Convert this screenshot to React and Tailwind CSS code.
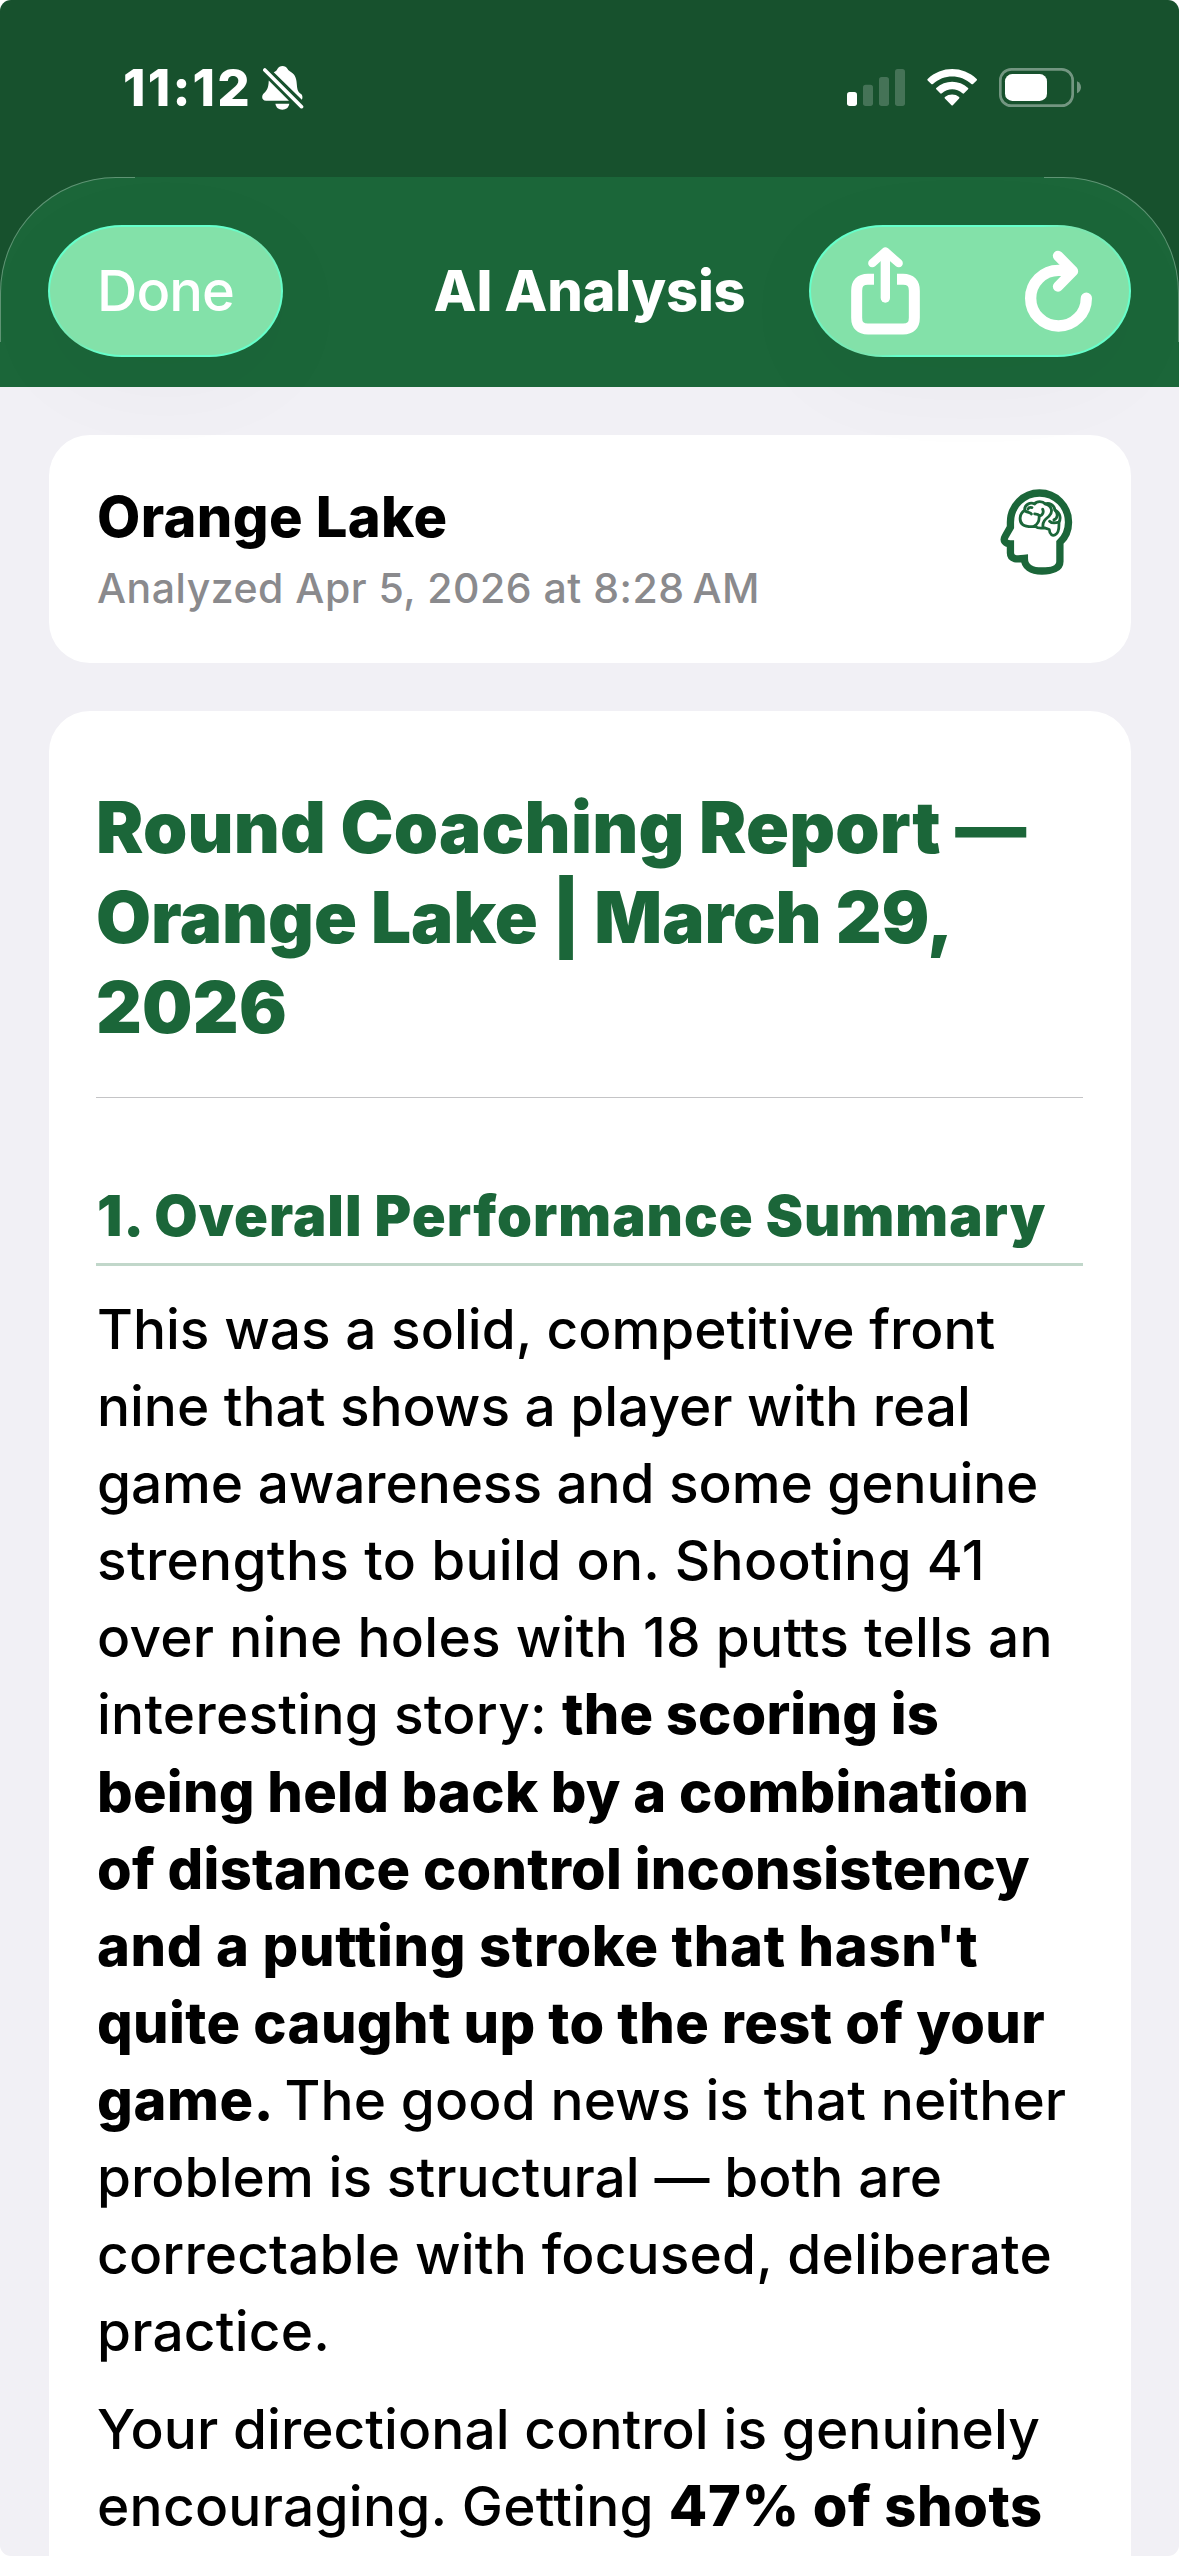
const SignalIcon = () => (
  <svg viewBox="198 207 174 111" className="w-[58px] h-[37px]" fill="white">
    <rect x="198" y="276" width="30" height="42" rx="8" />
    <rect x="246" y="254" width="30" height="64" rx="8" opacity="0.2" />
    <rect x="294" y="231" width="30" height="87" rx="8" opacity="0.2" />
    <rect x="342" y="207" width="30" height="111" rx="8" opacity="0.2" />
  </svg>
);

const WifiIcon = () => (
  <svg viewBox="439 207 151 111" className="w-[50px] h-[37px]" fill="white">
    <path d="M441 237C483 197 547 197 589 237Q591 239 589 241L578 252Q576 254 573 252C540 222 490 222 457 252Q454 254 452 252L441 241Q439 239 441 237Z" />
    <path d="M467 264C494 239 536 239 563 264Q565 266 563 268L551 280Q549 282 546 280C528 264 502 264 484 280Q481 282 479 280L467 268Q465 266 467 264Z" />
    <path d="M493 291C506 281 524 281 536 291Q538 293 536 296L517 316Q515 318 513 316L493 296Q491 293 493 291Z" />
  </svg>
);

const BatteryIcon = () => (
  <svg viewBox="657 204 246 117" className="w-[82px] h-[39px]" fill="white">
    <rect x="661" y="208" width="217" height="109" rx="33" fill="none" stroke="white" strokeWidth="8" opacity="0.4" />
    <rect x="675" y="222" width="126" height="81" rx="22" />
    <path d="M891 244C907 250 907 274 891 280Z" opacity="0.4" />
  </svg>
);

const BellOffIcon = () => (
  <svg viewBox="787 198 126 133" className="w-[42px] h-[44px]" fill="white">
    <path d="M822 217C829 213 831 211 833 207C839 195 858 195 864 207C866 211 869 213 874 216C889 225 891 240 892 256C893 272 897 277 905 283C909 287 910 294 907 300Z" />
    <path d="M807 242L868 303H799C787 303 784 291 790 283C799 274 806 269 807 242Z" />
    <path d="M827 312H869C867 324 859 330 848 330S829 324 827 312Z" />
    <path d="M795 210L906 321" stroke="white" strokeWidth="11" strokeLinecap="round" />
  </svg>
);

const ShareIcon = () => (
  <svg viewBox="213 751 207 264" className="w-[69px] h-[88px]" fill="none" stroke="white">
    <path d="M282 847.5H264Q230 847.5 230 882V963Q230 997 264 997H369Q403 997 403 963V882Q403 847.5 369 847.5H351" strokeWidth="33" />
    <path d="M316 770V904" strokeWidth="28" strokeLinecap="round" />
    <path d="M277 799.5L316 764.5L356 799.5" strokeWidth="25" strokeLinecap="round" strokeLinejoin="round" />
  </svg>
);

const RefreshIcon = () => (
  <svg viewBox="735 752 201 245" className="w-[67px] h-[82px]" fill="none" stroke="white" strokeLinecap="round" strokeLinejoin="round">
    <path d="M919 896A83.5 83.5 0 1 1 835.5 812.5H860" strokeWidth="34" />
    <path d="M834 769L879 815L834 861" strokeWidth="31" />
    <path d="M850 800L868 815L850 830Z" strokeWidth="8" fill="white" />
  </svg>
);

const BrainHeadIcon = () => (
  <svg viewBox="122 207 219 259" className="w-[73px] h-[86px]" fill="none" stroke="#1b6639">
    <path
      d="M153 307A87.5 88 0 0 1 328 307C328 333 318 353 302 368V425C302 446 278 454 248 454C215 454 195 440 195 416C174 419 153 420 153 400V372C137 372 130 362 137 350L153 322Z"
      strokeWidth="22"
    />
    {/* brain folds */}
    <g strokeWidth="8.5" strokeLinecap="round" strokeLinejoin="round">
      <path d="M196 272C180 280 178 305 190 314C200 322 215 320 228 320C236 327 250 325 256 324L270 329C271 345 280 349 288 345C296 341 300 325 299 307C306 295 303 278 287 270C285 255 270 248 258 252C250 243 232 243 226 252C212 245 194 255 196 272Z" />
      <path d="M196 272C204 279 213 276 216 282M206 267C208 262 213 262 218 263" />
      <path d="M250 268C255 278 247 291 239 286C235 282 231 283 226 282M239 286C241 300 235 313 224 319" />
      <path d="M258 252C280 258 281 278 269 289C258 298 249 306 251 321" />
      <path d="M299 307C288 310 278 312 271 304M287 270C297 280 296 295 284 300" />
    </g>
  </svg>
);

const GlassPill = ({ className, innerClassName, children }) => (
  <div
    className={`h-[132px] p-[2px] rounded-[74px/66px] bg-[conic-gradient(#66ffcb_0deg,#66ffcb_48deg,#7ce3ae_60deg,#66ffcb_88deg,#66ffcb_228deg,#7ce3ae_240deg,#66ffcb_268deg,#66ffcb_360deg)] shadow-[0_20px_110px_rgba(0,0,0,0.035)] ${className}`}
  >
    <div className={`h-full rounded-[72px/64px] bg-[#83e1a9] flex items-center ${innerClassName}`}>
      {children}
    </div>
  </div>
);

const StatusBar = () => (
  <div className="h-[177px] pt-[66px] pl-[123px] pr-[98px] flex items-start justify-between">
    <div className="flex items-start text-white">
      <span className="w-[139px] mt-[-8px] text-[51px] leading-[60px] font-extrabold tracking-[2.2px] whitespace-nowrap">11:12</span>
      <BellOffIcon />
    </div>
    <div className="flex items-center gap-[22px] mt-[2px]">
      <SignalIcon />
      <WifiIcon />
      <BatteryIcon />
    </div>
  </div>
);

const NavBar = () => (
  <div className="relative z-10 h-[210px] bg-[#1b6639] rounded-t-[116px] pt-[48px] px-[48px]">
    {/* thin light edge on both corners */}
    <span className="absolute left-0 top-0 w-[135px] h-[165px] border-l border-t border-white/30 rounded-tl-[116px]" />
    <span className="absolute right-0 top-0 w-[135px] h-[165px] border-r border-t border-white/30 rounded-tr-[116px]" />
    <div className="grid grid-cols-[322px_1fr_322px] items-center">
      <GlassPill className="w-[235px]" innerClassName="justify-center">
        <span className="text-white text-[56px] leading-[66px] font-[550] tracking-[-1px]">Done</span>
      </GlassPill>
      <h1 className="text-center text-white text-[56px] leading-[66px] font-extrabold tracking-[-0.2px] whitespace-nowrap">AI Analysis</h1>
      <GlassPill className="w-[322px]" innerClassName="justify-between pl-[40px] pr-[37px]">
        <ShareIcon />
        <RefreshIcon />
      </GlassPill>
    </div>
  </div>
);

const RoundCard = () => (
  <div className="h-[228px] shrink-0 bg-white rounded-[41px] pt-[49px] pl-[48px] pr-[58px] flex justify-between items-start">
    <div className="whitespace-nowrap">
      <h2 className="text-[56px] leading-[66px] font-extrabold text-black tracking-[0.4px]">Orange Lake</h2>
      <p className="mt-[13px] text-[41px] leading-[50px] font-[550] text-[#8a8a8d] tracking-[0.5px]">
        Analyzed Apr 5, 2026 at 8:28<span className="ml-[8px]">AM</span>
      </p>
    </div>
    <div className="pt-[5px]">
      <BrainHeadIcon />
    </div>
  </div>
);

// each line is a list of runs, b marks the strong ones
const paragraphs = [
  [
    [{ t: "This was a solid, competitive front", c: "tracking-[0px]" }],
    [{ t: "nine that shows a player with real", c: "tracking-[-0.05px]" }],
    [{ t: "game awareness and some genuine", c: "tracking-[-0.1px]" }],
    [{ t: "strengths to build on. Shooting 41", c: "tracking-[0.3px]" }],
    [{ t: "over nine holes with 18 putts tells an", c: "tracking-[0.25px]" }],
    [
      { t: "interesting story: ", c: "tracking-[0.25px]" },
      { t: "the scoring is", b: true, c: "tracking-[0.2px]" },
    ],
    [{ t: "being held back by a combination", b: true, c: "tracking-[0.25px]" }],
    [{ t: "of distance control inconsistency", b: true, c: "tracking-[0.25px]" }],
    [{ t: "and a putting stroke that hasn't", b: true, c: "tracking-[0.65px]" }],
    [{ t: "quite caught up to the rest of your", b: true, c: "tracking-[0.4px]" }],
    [
      { t: "game. ", b: true, c: "tracking-[0.6px]" },
      { t: "The good news is that neither", c: "tracking-[0.1px]" },
    ],
    [{ t: "problem is structural — both are", c: "tracking-[0.05px]" }],
    [{ t: "correctable with focused, deliberate", c: "tracking-[0.15px]" }],
    [{ t: "practice.", c: "tracking-[0.2px]" }],
  ],
  [
    [{ t: "Your directional control is genuinely", c: "tracking-[0.05px]" }],
    [
      { t: "encouraging. Getting ", c: "tracking-[0.25px]" },
      { t: "47% of shots", b: true, c: "tracking-[0.6px]" },
    ],
  ],
];

const ReportCard = () => (
  <div className="grow bg-white rounded-t-[41px] pl-[47px] pr-[48px] pt-[71px] whitespace-nowrap">
    <h2 className="text-[71px] leading-[90px] font-black text-[#1b6639] tracking-[0.2px]">
      Round Coaching Report —<br />
      <span className="tracking-[-0.1px]">Orange Lake | March 29,</span><br />
      2026
    </h2>
    <hr className="mt-[45px] border-t border-[#c4c4c6]" />
    <h3 className="pl-px mt-[83px] h-[85px] text-[56px] leading-[70px] font-black text-[#1b6639] tracking-[1px] border-b-3 border-[#c1d7ca]">
      1. Overall Performance Summary
    </h3>
    <div className="pl-px mt-[25px] text-[55px] leading-[77.1px] font-[550] text-black flex flex-col gap-[21px]">
      {paragraphs.map((lines, i) => (
        <p key={i}>
          {lines.map((runs, j) => (
            <span key={j} className="block h-[77.1px] whitespace-pre">
              {runs.map((run, k) => (
                <span key={k} className={`${run.c} ${run.b ? "text-[56px] leading-[77.1px] font-extrabold" : ""}`}>{run.t}</span>
              ))}
            </span>
          ))}
        </p>
      ))}
    </div>
  </div>
);

export default function App() {
  return (
    <div className="bg-white">
      <div className="w-[1179px] h-[2556px] overflow-hidden rounded-[11px] bg-[#f1f0f5] flex flex-col font-['Inter',sans-serif]">
        <div className="shrink-0 bg-[#17512d]">
          <StatusBar />
          <NavBar />
        </div>
        <div className="grow pt-[48px] pl-[49px] pr-[48px] flex flex-col gap-[48px]">
          <RoundCard />
          <ReportCard />
        </div>
      </div>
    </div>
  );
}
